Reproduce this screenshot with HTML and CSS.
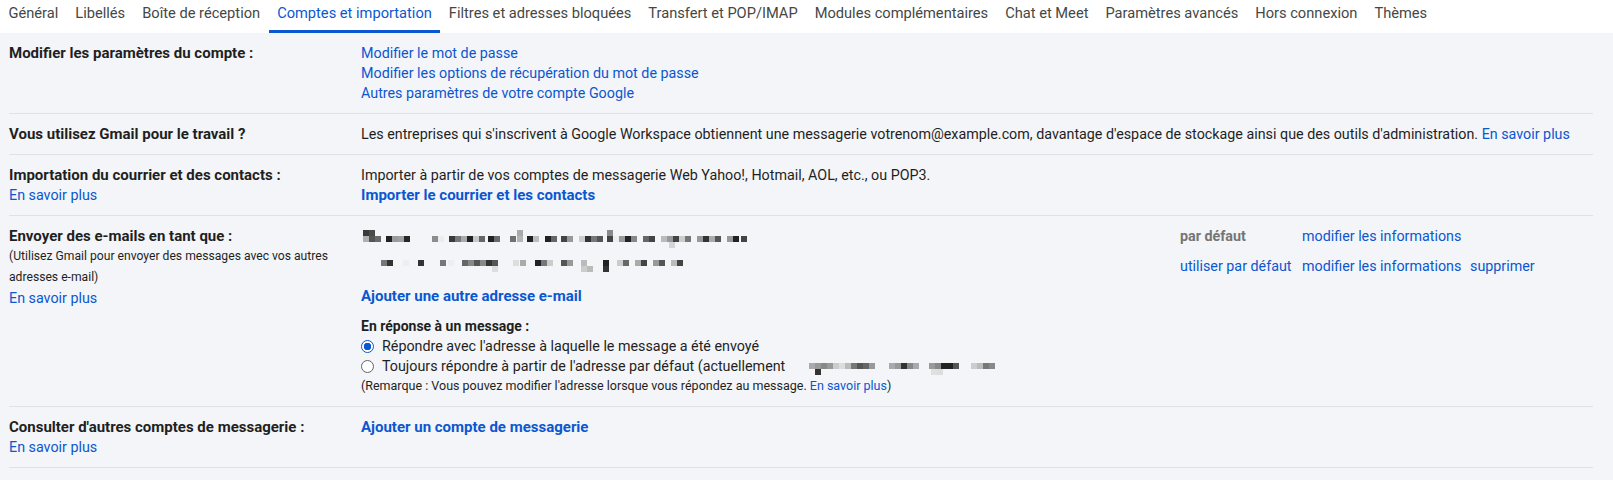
FILE: index.html
```html
<!DOCTYPE html>
<html lang="fr">
<head>
    <meta charset="UTF-8">
    <meta name="viewport" content="width=device-width, initial-scale=1.0">
    <title>Paramètres - Comptes et importation</title>
    <link rel="stylesheet" href="styles.css">
</head>
<body>
    <nav class="tabs">
        <a class="tab">Général</a>
        <a class="tab">Libellés</a>
        <a class="tab">Boîte de réception</a>
        <a class="tab active">Comptes et importation</a>
        <a class="tab">Filtres et adresses bloquées</a>
        <a class="tab">Transfert et POP/IMAP</a>
        <a class="tab">Modules complémentaires</a>
        <a class="tab">Chat et Meet</a>
        <a class="tab">Paramètres avancés</a>
        <a class="tab">Hors connexion</a>
        <a class="tab">Thèmes</a>
    </nav>

    <div class="settings">
        <div class="row">
            <div class="label">
                <div class="title">Modifier les paramètres du compte :</div>
            </div>
            <div class="value">
                <div><a href="#">Modifier le mot de passe</a></div>
                <div><a href="#">Modifier les options de récupération du mot de passe</a></div>
                <div><a href="#">Autres paramètres de votre compte Google</a></div>
            </div>
        </div>

        <div class="row">
            <div class="label">
                <div class="title">Vous utilisez Gmail pour le travail ?</div>
            </div>
            <div class="value nowrap">
                Les entreprises qui s'inscrivent à Google Workspace obtiennent une messagerie votrenom@example.com, davantage d'espace de stockage ainsi que des outils d'administration. <a href="#">En savoir plus</a>
            </div>
        </div>

        <div class="row">
            <div class="label">
                <div class="title">Importation du courrier et des contacts :</div>
                <div><a href="#">En savoir plus</a></div>
            </div>
            <div class="value">
                <div>Importer à partir de vos comptes de messagerie Web Yahoo!, Hotmail, AOL, etc., ou POP3.</div>
                <div><a href="#" class="strong">Importer le courrier et les contacts</a></div>
            </div>
        </div>

        <div class="row">
            <div class="label">
                <div class="title">Envoyer des e-mails en tant que :</div>
                <div class="small">(Utilisez Gmail pour envoyer des messages avec vos autres adresses e-mail)</div>
                <div><a href="#">En savoir plus</a></div>
            </div>
            <div class="value">
                <div class="sender">
                    <div class="addr">
                        <svg class="pix pix-first" width="390" height="18" shape-rendering="crispEdges">
                            <rect x="2" y="0" width="6" height="6" fill="#3a3a3a"/>
                            <rect x="8" y="0" width="6" height="6" fill="#4a4a4a"/>
                            <rect x="156" y="0" width="6" height="6" fill="#a9a9a9"/>
                            <rect x="246" y="0" width="6" height="6" fill="#8a8a8a"/>
                            <rect x="2" y="6" width="6" height="6" fill="#b0b0b0"/>
                            <rect x="8" y="6" width="6" height="6" fill="#555"/>
                            <rect x="14" y="6" width="6" height="6" fill="#6a6a6a"/>
                            <rect x="25" y="6" width="6" height="6" fill="#222"/>
                            <rect x="31" y="6" width="6" height="6" fill="#9a9a9a"/>
                            <rect x="37" y="6" width="6" height="6" fill="#a0a0a0"/>
                            <rect x="43" y="6" width="6" height="6" fill="#262626"/>
                            <rect x="71" y="6" width="6" height="6" fill="#8c8c8c"/>
                            <rect x="77" y="6" width="6" height="6" fill="#ececec"/>
                            <rect x="88" y="6" width="6" height="6" fill="#3a3a3a"/>
                            <rect x="94" y="6" width="6" height="6" fill="#777"/>
                            <rect x="100" y="6" width="6" height="6" fill="#aaa"/>
                            <rect x="106" y="6" width="6" height="6" fill="#222"/>
                            <rect x="112" y="6" width="6" height="6" fill="#c8c8c8"/>
                            <rect x="118" y="6" width="6" height="6" fill="#666"/>
                            <rect x="127" y="6" width="6" height="6" fill="#222"/>
                            <rect x="133" y="6" width="6" height="6" fill="#6a6a6a"/>
                            <rect x="149" y="6" width="6" height="6" fill="#707070"/>
                            <rect x="156" y="6" width="6" height="6" fill="#b5b5b5"/>
                            <rect x="166" y="6" width="6" height="6" fill="#222"/>
                            <rect x="172" y="6" width="6" height="6" fill="#bdbdbd"/>
                            <rect x="184" y="6" width="6" height="6" fill="#222"/>
                            <rect x="190" y="6" width="6" height="6" fill="#666"/>
                            <rect x="200" y="6" width="6" height="6" fill="#444"/>
                            <rect x="206" y="6" width="6" height="6" fill="#999"/>
                            <rect x="218" y="6" width="6" height="6" fill="#ccc"/>
                            <rect x="224" y="6" width="6" height="6" fill="#333"/>
                            <rect x="230" y="6" width="6" height="6" fill="#777"/>
                            <rect x="236" y="6" width="6" height="6" fill="#555"/>
                            <rect x="246" y="6" width="6" height="6" fill="#444"/>
                            <rect x="252" y="6" width="6" height="6" fill="#eee"/>
                            <rect x="258" y="6" width="6" height="6" fill="#999"/>
                            <rect x="264" y="6" width="6" height="6" fill="#222"/>
                            <rect x="270" y="6" width="6" height="6" fill="#888"/>
                            <rect x="282" y="6" width="6" height="6" fill="#666"/>
                            <rect x="288" y="6" width="6" height="6" fill="#444"/>
                            <rect x="300" y="6" width="6" height="6" fill="#bbb"/>
                            <rect x="306" y="6" width="6" height="6" fill="#999"/>
                            <rect x="312" y="6" width="6" height="6" fill="#444"/>
                            <rect x="318" y="6" width="6" height="6" fill="#ccc"/>
                            <rect x="324" y="6" width="6" height="6" fill="#777"/>
                            <rect x="336" y="6" width="6" height="6" fill="#999"/>
                            <rect x="342" y="6" width="6" height="6" fill="#333"/>
                            <rect x="348" y="6" width="6" height="6" fill="#aaa"/>
                            <rect x="354" y="6" width="6" height="6" fill="#555"/>
                            <rect x="366" y="6" width="6" height="6" fill="#999"/>
                            <rect x="372" y="6" width="6" height="6" fill="#222"/>
                            <rect x="380" y="6" width="6" height="6" fill="#444"/>
                            <rect x="308" y="12" width="6" height="6" fill="#d5d5d5"/>
                        </svg>
                    </div>
                    <div class="status">par défaut</div>
                    <div><a href="#">modifier les informations</a></div>
                    <div></div>
                </div>
                <div class="sender">
                    <div class="addr">
                        <svg class="pix pix-second" width="330" height="12" shape-rendering="crispEdges">
                            <rect x="20" y="0" width="6" height="6" fill="#777"/>
                            <rect x="26" y="0" width="6" height="6" fill="#333"/>
                            <rect x="42" y="0" width="6" height="6" fill="#eee"/>
                            <rect x="57" y="0" width="6" height="6" fill="#333"/>
                            <rect x="79" y="0" width="6" height="6" fill="#777"/>
                            <rect x="87" y="0" width="6" height="6" fill="#eee"/>
                            <rect x="101" y="0" width="6" height="6" fill="#666"/>
                            <rect x="107" y="0" width="6" height="6" fill="#888"/>
                            <rect x="113" y="0" width="6" height="6" fill="#555"/>
                            <rect x="119" y="0" width="6" height="6" fill="#888"/>
                            <rect x="125" y="0" width="6" height="6" fill="#333"/>
                            <rect x="131" y="0" width="6" height="6" fill="#555"/>
                            <rect x="152" y="0" width="6" height="6" fill="#ddd"/>
                            <rect x="159" y="0" width="6" height="6" fill="#aaa"/>
                            <rect x="174" y="0" width="6" height="6" fill="#222"/>
                            <rect x="180" y="0" width="6" height="6" fill="#777"/>
                            <rect x="186" y="0" width="6" height="6" fill="#ccc"/>
                            <rect x="200" y="0" width="6" height="6" fill="#555"/>
                            <rect x="206" y="0" width="6" height="6" fill="#999"/>
                            <rect x="220" y="0" width="6" height="6" fill="#bbb"/>
                            <rect x="242" y="0" width="6" height="6" fill="#222"/>
                            <rect x="256" y="0" width="6" height="6" fill="#ccc"/>
                            <rect x="262" y="0" width="6" height="6" fill="#666"/>
                            <rect x="274" y="0" width="6" height="6" fill="#aaa"/>
                            <rect x="280" y="0" width="6" height="6" fill="#444"/>
                            <rect x="292" y="0" width="6" height="6" fill="#999"/>
                            <rect x="298" y="0" width="6" height="6" fill="#555"/>
                            <rect x="310" y="0" width="6" height="6" fill="#bbb"/>
                            <rect x="316" y="0" width="6" height="6" fill="#444"/>
                            <rect x="131" y="6" width="6" height="6" fill="#ddd"/>
                            <rect x="220" y="6" width="6" height="6" fill="#ccc"/>
                            <rect x="226" y="6" width="6" height="6" fill="#bbb"/>
                            <rect x="242" y="6" width="6" height="6" fill="#333"/>
                        </svg>
                    </div>
                    <div><a href="#">utiliser par défaut</a></div>
                    <div><a href="#">modifier les informations</a></div>
                    <div><a href="#">supprimer</a></div>
                </div>
                <div class="add"><a href="#" class="strong">Ajouter une autre adresse e-mail</a></div>
                <div class="reply-title">En réponse à un message :</div>
                <label class="choice"><input type="radio" name="reply" checked>Répondre avec l'adresse à laquelle le message a été envoyé</label>
                <label class="choice"><input type="radio" name="reply">Toujours répondre à partir de l'adresse par défaut (actuellement
                    <svg class="pix pix-inline" width="190" height="12" shape-rendering="crispEdges">
                        <rect x="0" y="0" width="6" height="6" fill="#aaa"/>
                        <rect x="6" y="0" width="6" height="6" fill="#999"/>
                        <rect x="12" y="0" width="6" height="6" fill="#888"/>
                        <rect x="18" y="0" width="6" height="6" fill="#999"/>
                        <rect x="24" y="0" width="6" height="6" fill="#ccc"/>
                        <rect x="30" y="0" width="6" height="6" fill="#ddd"/>
                        <rect x="36" y="0" width="6" height="6" fill="#bbb"/>
                        <rect x="42" y="0" width="6" height="6" fill="#777"/>
                        <rect x="48" y="0" width="6" height="6" fill="#555"/>
                        <rect x="54" y="0" width="6" height="6" fill="#666"/>
                        <rect x="60" y="0" width="6" height="6" fill="#999"/>
                        <rect x="80" y="0" width="6" height="6" fill="#aaa"/>
                        <rect x="86" y="0" width="6" height="6" fill="#999"/>
                        <rect x="92" y="0" width="6" height="6" fill="#333"/>
                        <rect x="98" y="0" width="6" height="6" fill="#888"/>
                        <rect x="104" y="0" width="6" height="6" fill="#aaa"/>
                        <rect x="120" y="0" width="6" height="6" fill="#999"/>
                        <rect x="126" y="0" width="6" height="6" fill="#888"/>
                        <rect x="132" y="0" width="6" height="6" fill="#222"/>
                        <rect x="138" y="0" width="6" height="6" fill="#222"/>
                        <rect x="144" y="0" width="6" height="6" fill="#555"/>
                        <rect x="162" y="0" width="6" height="6" fill="#ccc"/>
                        <rect x="168" y="0" width="6" height="6" fill="#bbb"/>
                        <rect x="174" y="0" width="6" height="6" fill="#777"/>
                        <rect x="180" y="0" width="6" height="6" fill="#888"/>
                        <rect x="6" y="6" width="6" height="6" fill="#333"/>
                        <rect x="122" y="6" width="6" height="6" fill="#e0e0e0"/>
                        <rect x="128" y="6" width="6" height="6" fill="#ddd"/>
                    </svg>
                </label>
                <div class="note">(Remarque : Vous pouvez modifier l'adresse lorsque vous répondez au message. <a href="#">En savoir plus</a>)</div>
            </div>
        </div>

        <div class="row">
            <div class="label">
                <div class="title">Consulter d'autres comptes de messagerie :</div>
                <div><a href="#">En savoir plus</a></div>
            </div>
            <div class="value">
                <div><a href="#" class="strong">Ajouter un compte de messagerie</a></div>
            </div>
        </div>
    </div>
</body>
</html>
```

FILE: styles.css
```css
* {
    box-sizing: border-box;
}
body {
    margin: 0;
    background-color: #f3f5f8;
    font-family: Roboto, "Liberation Sans", Arial, sans-serif;
    font-size: 14.3px;
    color: #1f1f1f;
}
a {
    color: #0b57d0;
    text-decoration: none;
    cursor: pointer;
}
.tabs {
    display: flex;
    height: 33px;
    background-color: #fff;
}
.tab {
    height: 33px;
    padding: 0 8.5px 3px;
    line-height: 27px;
    font-size: 14.65px;
    color: #444746;
    border-bottom: 3px solid transparent;
    white-space: nowrap;
}
.tab.active {
    color: #0b57d0;
    border-bottom-color: #0b57d0;
}
.settings {
    margin: 0 20px 0 9px;
}
.row {
    display: grid;
    grid-template-columns: 352px 1fr;
    padding: 10px 0;
    border-bottom: 1px solid #dfe1e5;
    line-height: 20px;
}
.title {
    font-weight: bold;
    font-size: 15px;
}
.strong {
    font-weight: bold;
    font-size: 15px;
}
.reply-title {
    font-weight: bold;
    font-size: 14px;
}
.nowrap {
    white-space: nowrap;
}
.small {
    font-size: 12.15px;
    line-height: 21px;
}
.note {
    font-size: 12.5px;
    line-height: 20px;
}
.sender {
    display: grid;
    grid-template-columns: 819px 122px 168px auto;
    margin-bottom: 10px;
}
.addr {
    height: 20px;
}
.pix {
    display: block;
}
.pix-first {
    margin-top: 4px;
}
.pix-second {
    margin-top: 4px;
}
.pix-inline {
    display: inline-block;
    vertical-align: top;
    margin: 5px 0 0 24px;
}
.status {
    font-weight: bold;
    color: #757575;
}
.add {
    margin-bottom: 10px;
}
.choice {
    display: flex;
    align-items: center;
    white-space: nowrap;
}
.choice input {
    appearance: none;
    width: 13px;
    height: 13px;
    margin: 0 8px 0 0;
    border: 1px solid #5f6368;
    border-radius: 50%;
    background-color: #fff;
}
.choice input:checked {
    border-color: #0b57d0;
    background: radial-gradient(circle, #0b57d0 0, #0b57d0 3.5px, #fff 4px);
}
```
